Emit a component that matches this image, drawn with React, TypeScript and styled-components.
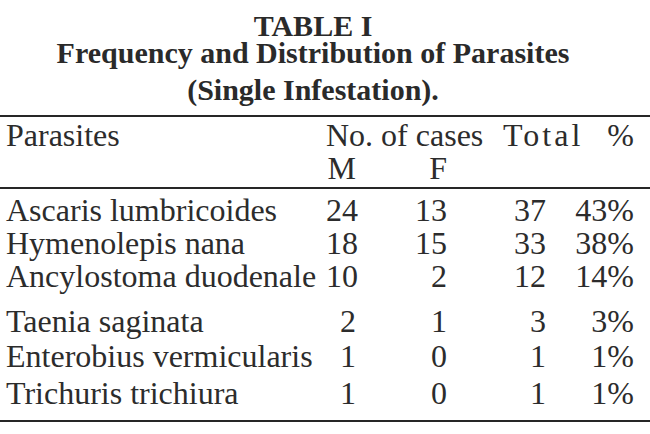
import React from "react";
import styled, { createGlobalStyle } from "styled-components";

const Global = createGlobalStyle`
  html, body { margin: 0; padding: 0; background: #ffffff; }
  body { font-family: "Liberation Serif", "Times New Roman", serif; color: #2c2c2c; }
`;

const Page = styled.div`
  width: 650px;
  height: 434px;
  overflow: hidden;
  padding-top: 12px;
  box-sizing: border-box;
`;

const Title = styled.div`
  padding-right: 24px;
  text-align: center;
  font-weight: bold;
  font-size: 30px;
  color: #2a2a2a;
`;

const TitleLine = styled.div<{ $lh: number }>`
  line-height: ${(p) => p.$lh}px;
  white-space: nowrap;
`;

const Rule = styled.div<{ $mt: number }>`
  margin-top: ${(p) => p.$mt}px;
  height: 2px;
  background: #262626;
`;

const HeadGrid = styled.div`
  display: grid;
  grid-template-columns: 320px 177px 80px 51px;
  padding-left: 6px;
  margin-top: 2px;
  font-size: 32px;
  line-height: 33px;
  white-space: nowrap;
`;

const DataGrid = styled.div<{ $mt?: number }>`
  display: grid;
  grid-template-columns: 320px 30px 91px 99px 88px;
  padding-left: 6px;
  margin-top: ${(p) => p.$mt ?? 0}px;
  font-size: 32px;
  line-height: 33px;
  white-space: nowrap;
`;

const Cell = styled.div<{ $align?: "left" | "right"; $ls?: number }>`
  text-align: ${(p) => p.$align ?? "left"};
  letter-spacing: ${(p) => p.$ls ?? 0}px;
`;

const rows: { name: string; m: string; f: string; total: string; pct: string; gap: number }[] = [
  { name: "Ascaris lumbricoides", m: "24", f: "13", total: "37", pct: "43%", gap: 5 },
  { name: "Hymenolepis nana", m: "18", f: "15", total: "33", pct: "38%", gap: 0 },
  { name: "Ancylostoma duodenale", m: "10", f: "2", total: "12", pct: "14%", gap: 0 },
  { name: "Taenia saginata", m: "2", f: "1", total: "3", pct: "3%", gap: 12 },
  { name: "Enterobius vermicularis", m: "1", f: "0", total: "1", pct: "1%", gap: 2 },
  { name: "Trichuris trichiura", m: "1", f: "0", total: "1", pct: "1%", gap: 4 },
];

export default function App() {
  return (
    <>
      <Global />
      <Page>
        <Title>
          <TitleLine $lh={27}>TABLE I</TitleLine>
          <TitleLine $lh={27}>Frequency and Distribution of Parasites</TitleLine>
          <TitleLine $lh={47}>(Single Infestation).</TitleLine>
        </Title>
        <Rule $mt={2} />
        <HeadGrid>
          <Cell>Parasites</Cell>
          <Cell>No. of cases</Cell>
          <Cell $ls={3}>Total</Cell>
          <Cell $align="right">%</Cell>
        </HeadGrid>
        <DataGrid>
          <Cell />
          <Cell $align="right">M</Cell>
          <Cell $align="right">F</Cell>
          <Cell />
          <Cell />
        </DataGrid>
        <Rule $mt={2} />
        {rows.map((r) => (
          <DataGrid key={r.name} $mt={r.gap}>
            <Cell>{r.name}</Cell>
            <Cell $align="right">{r.m}</Cell>
            <Cell $align="right">{r.f}</Cell>
            <Cell $align="right">{r.total}</Cell>
            <Cell $align="right">{r.pct}</Cell>
          </DataGrid>
        ))}
        <Rule $mt={10} />
      </Page>
    </>
  );
}
